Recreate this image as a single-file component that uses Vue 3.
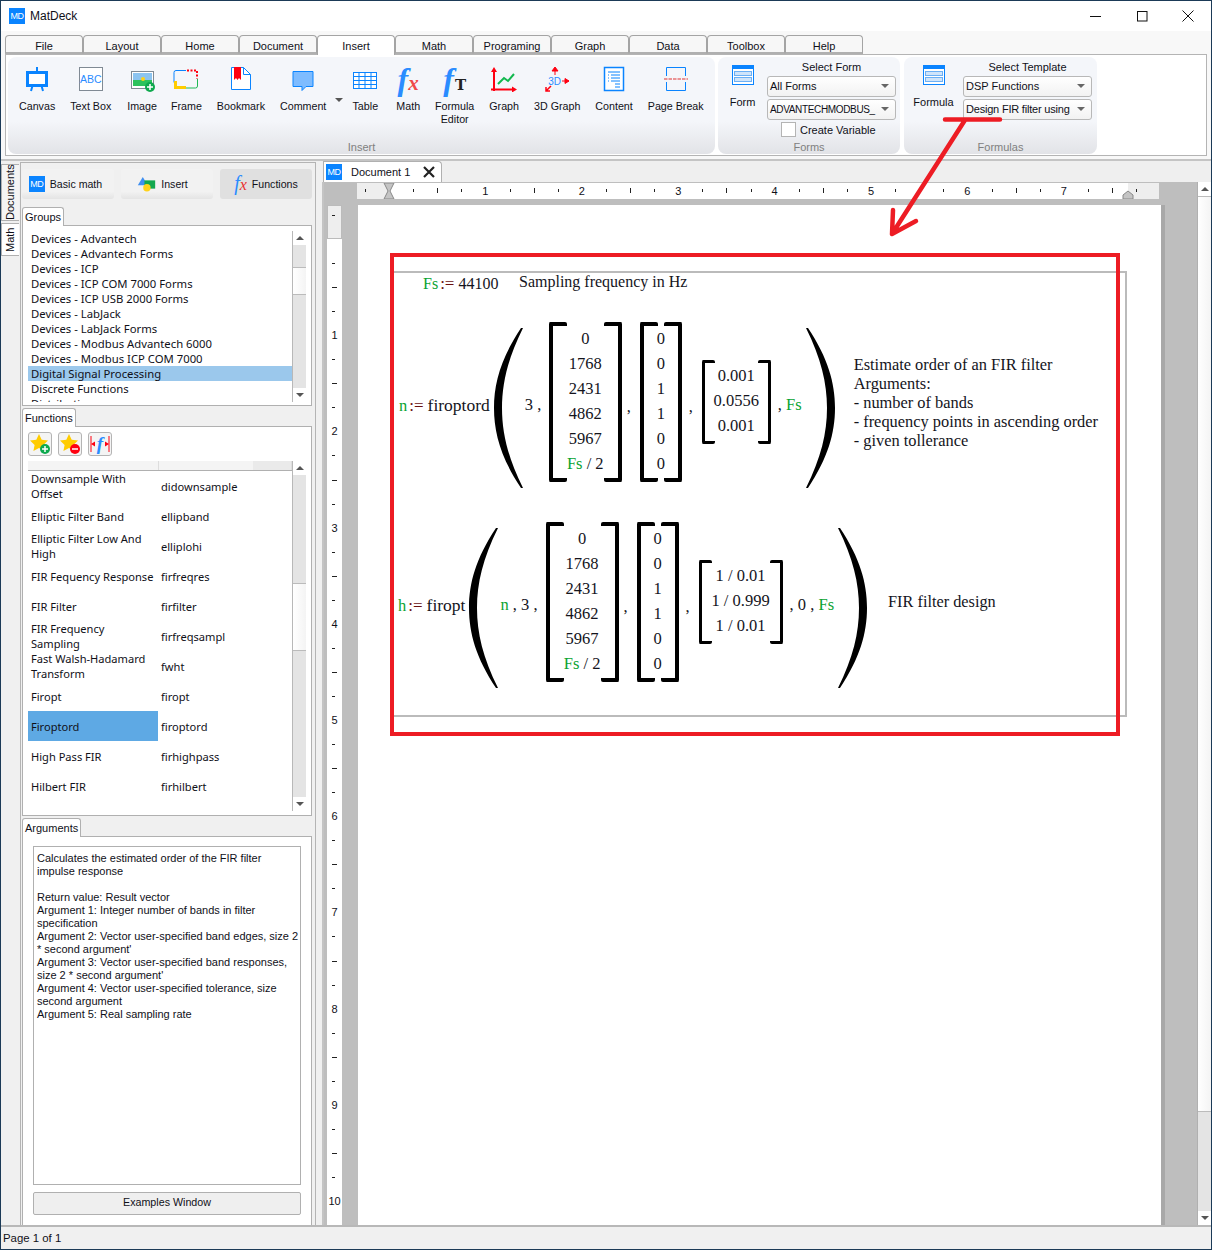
<script setup>
import { computed } from 'vue'

const groups = [
  'Devices - Advantech', 'Devices - Advantech Forms', 'Devices - ICP', 'Devices - ICP COM 7000 Forms',
  'Devices - ICP USB 2000 Forms', 'Devices - LabJack', 'Devices - LabJack Forms', 'Devices - Modbus Advantech 6000',
  'Devices - Modbus ICP COM 7000', 'Digital Signal Processing', 'Discrete Functions', 'Distribution'
]

const functions = [
  ['Downsample With Offset', 'didownsample'],
  ['Elliptic Filter Band', 'ellipband'],
  ['Elliptic Filter Low And High', 'elliplohi'],
  ['FIR Fequency Response', 'firfreqres'],
  ['FIR Filter', 'firfilter'],
  ['FIR Frequency Sampling', 'firfreqsampl'],
  ['Fast Walsh-Hadamard Transform', 'fwht'],
  ['Firopt', 'firopt'],
  ['Firoptord', 'firoptord'],
  ['High Pass FIR', 'firhighpass'],
  ['Hilbert FIR', 'firhilbert']
]

const tabs = ['File', 'Layout', 'Home', 'Document', 'Insert', 'Math', 'Programing', 'Graph', 'Data', 'Toolbox', 'Help']

const argLines = [
  'Calculates the estimated order of the FIR filter',
  'impulse response',
  '',
  'Return value: Result vector',
  'Argument 1: Integer number of bands in filter',
  'specification',
  'Argument 2: Vector user-specified band edges, size 2',
  '* second argument\'',
  'Argument 3: Vector user-specified band responses,',
  'size 2 * second argument\'',
  'Argument 4: Vector user-specified tolerance, size',
  'second argument',
  'Argument 5: Real sampling rate'
]

// ruler marks, one every quarter of a unit (24.1px)
const hMarks = computed(() => {
  const out = []
  for (let i = -1; i <= 31; i++) {
    const kind = i % 4 === 0 ? 'num' : i % 2 === 0 ? 'long' : 'short'
    if (i !== 0) out.push({ pos: 32 + i * 24.1, kind, label: i / 4 })
  }
  return out
})

const vMarks = computed(() => {
  const out = []
  for (let i = -1; i <= 40; i++) {
    const kind = i % 4 === 0 ? 'num' : i % 2 === 0 ? 'long' : 'short'
    if (i !== 0) out.push({ pos: 34 + i * 24.05, kind, label: i / 4 })
  }
  return out
})

const m1 = ['0', '1768', '2431', '4862', '5967']
const m2 = ['0', '0', '1', '1', '0', '0']
</script>

<template>
  <div class="window">
    <!-- Titelleiste -->
    <header class="titlebar">
      <span class="md-logo">MD</span>
      <span class="app-name">MatDeck</span>
      <div class="win-controls">
        <svg width="16" height="16" viewBox="0 0 16 16"><path d="M2 8.5h11" stroke="#111" stroke-width="1" /></svg>
        <svg width="16" height="16" viewBox="0 0 16 16"><rect x="3.5" y="3.5" width="9.5" height="9.5" fill="none" stroke="#111" /></svg>
        <svg width="16" height="16" viewBox="0 0 16 16"><path d="M2.5 2.5l11 11M13.5 2.5l-11 11" stroke="#111" /></svg>
      </div>
    </header>

    <!-- Ribbon -->
    <div class="ribbon-wrap">
      <nav class="ribbon-tabs">
        <div v-for="t in tabs" :key="t" class="ribbon-tab" :class="{ active: t === 'Insert' }">{{ t }}</div>
      </nav>
      <div class="ribbon">
        <section class="group group-insert">
          <div class="tools">
            <div class="tool">
              <svg width="24" height="26" viewBox="0 0 24 26"><path d="M12 1v4M6 25l2-7M18 25l-2-7" stroke="#0a84ff" stroke-width="2" fill="none" /><rect x="2.500" y="6.500" width="19" height="13" fill="#fff" stroke="#0a84ff" stroke-width="3" /></svg>
              <span>Canvas</span>
            </div>
            <div class="tool">
              <div class="abc-icon"><span>ABC</span></div>
              <span>Text Box</span>
            </div>
            <div class="tool image-tool">
              <svg width="26" height="26" viewBox="0 0 26 26"><rect x="2.500" y="5.500" width="22" height="17" fill="#fff" stroke="#808a94" /><rect x="4" y="7" width="19" height="7" fill="#8cc4f0" /><rect x="4" y="14" width="19" height="6" fill="#2cc25c" /><circle cx="14" cy="13" r="2" fill="#ffd21a" /><circle cx="21" cy="21" r="5" fill="#0ea94e" /><path d="M21 18v6M18 21h6" stroke="#fff" stroke-width="1.500" /></svg>
              <span>Image</span>
            </div>
            <div class="tool">
              <svg width="26" height="26" viewBox="0 0 26 26"><path d="M13 4.500H3q-2 0-2 2v10" fill="none" stroke="#0a84ff" /><path d="M14 4.500h10v8" fill="none" stroke="#f01" stroke-width="2" stroke-dasharray="2 1.500" /><path d="M24.500 13v7q0 2-2 2H13" fill="none" stroke="#1eb854" /><path d="M1 15v8h12v-3H4v-5z" fill="#fc0" /></svg>
              <span>Frame</span>
            </div>
            <div class="tool">
              <svg width="22" height="26" viewBox="0 0 22 26"><path d="M1.500 1.500h12l7 7v15h-19z" fill="#fff" stroke="#0a84ff" /><path d="M13.500 1.500v7h7" fill="none" stroke="#0a84ff" /><path d="M4 1h7v13l-2-2-1.500 2-1.500-2-2 2z" fill="#f01" /></svg>
              <span>Bookmark</span>
            </div>
            <div class="tool">
              <svg width="24" height="26" viewBox="0 0 24 26"><path d="M2 5.500h20v15h-7l-4 4v-4H2z" fill="#7ebcff" stroke="#0a84ff" /></svg>
              <span>Comment</span>
            </div>
            <div class="drop-arrow"></div>
            <div class="tool">
              <svg width="26" height="26" viewBox="0 0 26 26"><rect x="1.500" y="6.500" width="23" height="16" fill="#fff" stroke="#0a84ff" /><path d="M1.500 10.500h23M1.500 14.500h23M1.500 18.500h23M7 6.500v16M13 6.500v16M19 6.500v16" stroke="#0a84ff" fill="none" /></svg>
              <span>Table</span>
            </div>
            <div class="tool math-tool">
              <div class="fx-icon"><i class="f">f</i><i class="x">x</i></div>
              <span>Math</span>
            </div>
            <div class="tool">
              <div class="fx-icon"><i class="f">f</i><b class="t">T</b></div>
              <span>Formula<br>Editor</span>
            </div>
            <div class="tool">
              <svg width="26" height="26" viewBox="0 0 26 26"><path d="M3 3v22M0 23.500h23" stroke="#f01" stroke-width="2" fill="none" /><path d="M3 1L0 6h6zM26 23.500l-5-3v6z" fill="#f01" /><path d="M7 18l6-6 4 3 6-7" stroke="#12b84e" stroke-width="2" fill="none" /></svg>
              <span>Graph</span>
            </div>
            <div class="tool">
              <div class="d3-icon">
                <span>3D</span>
                <svg width="26" height="26" viewBox="0 0 26 26"><path d="M11 9V3M11 1l3 4H8z" fill="#f01" stroke="#f01" /><path d="M18 15h7M25 15l-4-2.500v5z" fill="#f01" stroke="#f01" /><path d="M7 20l-5 5M2 21v4h4" fill="none" stroke="#f01" stroke-width="1.500" /></svg>
              </div>
              <span>3D Graph</span>
            </div>
            <div class="tool">
              <svg width="22" height="26" viewBox="0 0 22 26"><rect x="1.500" y="1.500" width="19" height="23" fill="#fff" stroke="#0a84ff" stroke-width="1.500" /><path d="M5 6h12M5 9h1M8 9h9M5 12h1M8 12h9M5 15h1M8 15h9M12 18h5M12 21h5" stroke="#0a84ff" /></svg>
              <span>Content</span>
            </div>
            <div class="tool">
              <svg width="26" height="26" viewBox="0 0 26 26"><path d="M3.500 10V1.500h19V10M3.500 16v8.500h19V16" fill="none" stroke="#0a84ff" /><path d="M1 13h24" stroke="#e03030" stroke-dasharray="3.500 1" /></svg>
              <span>Page Break</span>
            </div>
          </div>
          <div class="group-label">Insert</div>
        </section>

        <section class="group group-forms">
          <div class="group-body">
            <div class="tool form-tool">
              <svg width="22" height="20" viewBox="0 0 22 20"><rect x=".5" y=".5" width="21" height="19" fill="#fff" stroke="#0a84ff" /><rect x="0" y="0" width="22" height="4" fill="#0a84ff" /><rect x="2.500" y="6.500" width="17" height="4" fill="#cfe4fa" stroke="#6cb0f5" /><rect x="2.500" y="12.500" width="17" height="4" fill="#cfe4fa" stroke="#6cb0f5" /></svg>
              <span>Form</span>
            </div>
            <div class="selects">
              <div class="select-title">Select Form</div>
              <div class="combo"><span>All Forms</span></div>
              <div class="combo"><span class="tight">ADVANTECHMODBUS_</span></div>
              <label class="check"><span class="box"></span>Create Variable</label>
            </div>
          </div>
          <div class="group-label">Forms</div>
        </section>

        <section class="group group-formulas">
          <div class="group-body">
            <div class="tool form-tool wide">
              <svg width="22" height="20" viewBox="0 0 22 20"><rect x=".5" y=".5" width="21" height="19" fill="#fff" stroke="#0a84ff" /><rect x="0" y="0" width="22" height="4" fill="#0a84ff" /><rect x="2.500" y="6.500" width="17" height="4" fill="#cfe4fa" stroke="#6cb0f5" /><rect x="2.500" y="12.500" width="17" height="4" fill="#cfe4fa" stroke="#6cb0f5" /></svg>
              <span>Formula</span>
            </div>
            <div class="selects">
              <div class="select-title">Select Template</div>
              <div class="combo"><span>DSP Functions</span></div>
              <div class="combo"><span class="slim">Design FIR filter using</span></div>
            </div>
          </div>
          <div class="group-label">Formulas</div>
        </section>
      </div>
    </div>

    <div class="main">
      <!-- Vertikale Tabs links -->
      <aside class="side-tabs">
        <div class="side-tab">Documents</div>
        <div class="side-tab active">Math</div>
      </aside>

      <!-- Linkes Panel -->
      <div class="left-panel">
        <div class="mode-buttons">
          <div class="mode-btn basic"><span class="md-logo">MD</span>Basic math</div>
          <div class="mode-btn insert">
            <svg width="19" height="17" viewBox="0 0 23 20"><path d="M7 1l6 10H1z" fill="#3f8ff0" /><rect x="9" y="5" width="13" height="10" fill="#12a84e" /><circle cx="12" cy="14" r="4.500" fill="#ffd21a" /></svg>
            Insert
          </div>
          <div class="mode-btn on"><span class="fx-small"><i class="f">f</i><i class="x">x</i></span>Functions</div>
        </div>

        <div class="pane-tab">Groups</div>
        <div class="pane groups-pane">
          <ul class="group-list">
            <li v-for="g in groups" :key="g" :class="{ sel: g === 'Digital Signal Processing' }">{{ g }}</li>
          </ul>
          <div class="vscroll">
            <div class="arrow up"></div>
            <div class="track grow-a"></div>
            <div class="thumb grow-b"></div>
            <div class="track grow-c"></div>
            <div class="arrow down"></div>
          </div>
        </div>

        <div class="pane-tab">Functions</div>
        <div class="pane functions-pane">
          <div class="fav-buttons">
            <div class="fav">
              <svg width="22" height="22" viewBox="0 0 22 22"><path d="M10 1l2.700 5.800 6.300.8-4.600 4.300 1.200 6.200L10 15l-5.600 3.100 1.200-6.200L1 7.600l6.300-.8z" fill="#fc0" /><circle cx="16" cy="16" r="5" fill="#0ea94e" /><path d="M16 13v6M13 16h6" stroke="#fff" stroke-width="1.500" /></svg>
            </div>
            <div class="fav">
              <svg width="22" height="22" viewBox="0 0 22 22"><path d="M10 1l2.700 5.800 6.300.8-4.600 4.300 1.200 6.200L10 15l-5.600 3.100 1.200-6.200L1 7.600l6.300-.8z" fill="#fc0" /><circle cx="16" cy="16" r="5" fill="#f01" /><path d="M13 16h6" stroke="#fff" stroke-width="1.500" /></svg>
            </div>
            <div class="fav">
              <span class="fav-f">f</span>
              <svg class="fav-marks" width="22" height="22" viewBox="0 0 22 22"><path d="M2 3v16M20 3v16" stroke="#f01" /><path d="M2 11l4-2.500v5zM20 11l-4-2.500v5z" fill="#f01" /></svg>
            </div>
          </div>
          <div class="fn-table">
            <div class="fn-grid">
              <div class="fn-head"><span></span><span></span><span class="fn-head-end"></span></div>
              <div v-for="f in functions" :key="f[1]" class="fn-row">
                <div class="fn-name" :class="{ sel: f[1] === 'firoptord' }">{{ f[0] }}</div>
                <div class="fn-code">{{ f[1] }}</div>
              </div>
            </div>
            <div class="vscroll">
              <div class="arrow up"></div>
              <div class="track fn-a"></div>
              <div class="thumb fn-b"></div>
              <div class="track fn-c"></div>
              <div class="arrow down"></div>
            </div>
          </div>
        </div>

        <div class="pane-tab">Arguments</div>
        <div class="pane args-pane">
          <div class="args-text">
            <div v-for="(line, i) in argLines" :key="i" class="arg-line">{{ line }}</div>
          </div>
          <div class="examples-btn">Examples Window</div>
        </div>
      </div>

      <!-- Dokumentbereich -->
      <div class="doc-area">
        <div class="doc-tabs">
          <div class="doc-tab">
            <span class="md-logo">MD</span>
            <span class="doc-name">Document 1</span>
            <svg width="14" height="14" viewBox="0 0 14 14"><path d="M2 2l10 10M12 2L2 12" stroke="#222" stroke-width="2.200" /></svg>
          </div>
        </div>
        <div class="doc-view">
          <div class="doc-scroll-area">
            <div class="hruler">
              <div class="hruler-margin left"></div>
              <div class="hruler-margin right"></div>
              <template v-for="m in hMarks" :key="m.pos">
                <span v-if="m.kind === 'num'" class="h-num" :style="{ left: m.pos + 'px' }">{{ m.label }}</span>
                <span v-else class="h-tick" :class="m.kind" :style="{ left: m.pos + 'px' }"></span>
              </template>
              <svg class="marker m0" width="12" height="16" viewBox="0 0 12 16"><path d="M1 0h10L7 8l4 8H1l4-8z" fill="#c4c4c4" stroke="#888" /></svg>
              <svg class="marker m1" width="12" height="16" viewBox="0 0 12 16"><path d="M6 8l5 4v4H1v-4z" fill="#c4c4c4" stroke="#888" /></svg>
            </div>
            <div class="doc-row">
              <div class="vruler">
                <div class="vruler-margin"></div>
                <template v-for="m in vMarks" :key="m.pos">
                  <span v-if="m.kind === 'num'" class="v-num" :style="{ top: m.pos + 'px' }">{{ m.label }}</span>
                  <span v-else class="v-tick" :class="m.kind" :style="{ top: m.pos + 'px' }"></span>
                </template>
              </div>
              <div class="page">
                <div class="region"></div>

                <div class="line-fs">
                  <span class="var">Fs</span><span class="op">:=</span><span class="num"> 44100</span>
                </div>
                <div class="note note-fs">Sampling frequency in Hz</div>

                <!-- n := firoptord(...) -->
                <div class="expr expr-n">
                  <span class="lhs"><span class="var">n</span><span class="op">:=</span><span class="call">firoptord</span></span>
                  <svg class="paren" width="30" height="160" viewBox="0 0 30 160"><path d="M28 0C8 30 1 55 1 80s7 50 27 80h2C15 130 9 105 9 80s6-50 21-80z" /></svg>
                  <span class="arg a-3">3 ,</span>
                  <div class="matrix big wide">
                    <div v-for="(v, i) in m1" :key="i">{{ v }}</div>
                    <div><span class="var">Fs</span> / 2</div>
                  </div>
                  <span class="comma c1">,</span>
                  <div class="matrix big narrow"><div v-for="(v, i) in m2" :key="i">{{ v }}</div></div>
                  <span class="comma c2">,</span>
                  <div class="matrix small tol1">
                    <div>0.001</div><div>0.0556</div><div>0.001</div>
                  </div>
                  <span class="arg a-fs">, <span class="var">Fs</span></span>
                  <svg class="paren" width="30" height="160" viewBox="0 0 30 160"><path d="M2 0c20 30 27 55 27 80s-7 50-27 80H0c15-30 21-55 21-80S15 30 0 0z" /></svg>
                  <div class="note note-n">
                    Estimate order of an FIR filter<br>Arguments:<br>- number of bands<br>- frequency points in ascending order<br>- given tollerance
                  </div>
                </div>

                <!-- h := firopt(...) -->
                <div class="expr expr-h">
                  <span class="lhs"><span class="var">h</span><span class="op">:=</span><span class="call">firopt</span></span>
                  <svg class="paren" width="30" height="160" viewBox="0 0 30 160"><path d="M28 0C8 30 1 55 1 80s7 50 27 80h2C15 130 9 105 9 80s6-50 21-80z" /></svg>
                  <span class="arg a-n"><span class="var">n</span> , 3 ,</span>
                  <div class="matrix big wide">
                    <div v-for="(v, i) in m1" :key="i">{{ v }}</div>
                    <div><span class="var">Fs</span> / 2</div>
                  </div>
                  <span class="comma c1">,</span>
                  <div class="matrix big narrow"><div v-for="(v, i) in m2" :key="i">{{ v }}</div></div>
                  <span class="comma c2">,</span>
                  <div class="matrix small tol2">
                    <div>1 / 0.01</div><div>1 / 0.999</div><div>1 / 0.01</div>
                  </div>
                  <span class="arg a-0">, 0 , <span class="var">Fs</span></span>
                  <svg class="paren" width="30" height="160" viewBox="0 0 30 160"><path d="M2 0c20 30 27 55 27 80s-7 50-27 80H0c15-30 21-55 21-80S15 30 0 0z" /></svg>
                  <div class="note note-h">FIR filter design</div>
                </div>
              </div>
            </div>
          </div>
          <div class="vscroll doc-scroll">
            <div class="arrow up"></div>
            <div class="thumb doc-thumb"></div>
            <div class="track doc-track"></div>
            <div class="arrow down"></div>
          </div>
        </div>
      </div>
    </div>

    <footer class="statusbar">Page 1 of 1</footer>

    <!-- rote Markierung über dem Screenshot -->
    <div class="mark-rect"></div>
    <svg class="mark-arrow" width="1212" height="1250" viewBox="0 0 1212 1250">
      <path d="M945 119.500h55M965 120L892 234M893 210l-1 24 24-13" fill="none" stroke="#ed1c24" stroke-width="4.500" stroke-linecap="round" stroke-linejoin="round" />
    </svg>
  </div>
</template>

<style>
html, body { margin: 0; background: #f0f0f0; }
</style>

<style scoped>
.window {
  position: relative;
  width: 1212px;
  height: 1250px;
  box-sizing: border-box;
  border: 1px solid #1b3a57;
  background: #f0f0f0;
  font-family: "Liberation Sans", sans-serif;
  font-size: 11px;
  color: #101018;
  display: flex;
  flex-direction: column;
  overflow: hidden;
}

.md-logo {
  display: inline-flex;
  align-items: center;
  justify-content: center;
  width: 16px;
  height: 16px;
  background: #0a84ff;
  color: #fff;
  font-size: 9px;
  letter-spacing: -0.5px;
  flex: none;
}

/* Titelleiste */
.titlebar {
  height: 30px;
  background: #fff;
  display: flex;
  align-items: center;
  padding: 0 15px 0 8px;
  flex: none;
}
.app-name { margin-left: 5px; font-size: 12px; }
.win-controls { margin-left: auto; display: flex; gap: 30px; }

/* Ribbon */
.ribbon-wrap {
  background: #f8f8f8;
  padding: 4px 4px 0;
  flex: none;
  height: 130px;
  box-sizing: border-box;
  border-bottom: 2px solid #c4c4c4;
}
.ribbon-tabs { display: flex; height: 19px; }
.ribbon-tab {
  width: 78px;
  box-sizing: border-box;
  text-align: center;
  line-height: 20px;
  background: #f7f7f7;
  border: 1px solid #a4a4a4;
  border-bottom: 2px solid #b0b0b0;
  border-radius: 4px 4px 0 0;
}
.ribbon-tab.active { background: #fff; border-bottom: 0; position: relative; z-index: 1; height: 20px; }
.ribbon {
  height: 102px;
  box-sizing: border-box;
  background: #fff;
  border: 1px solid #b4b4b4;
  padding: 2px;
  display: flex;
  gap: 3px;
}
.group {
  display: flex;
  flex-direction: column;
  height: 97px;
  border-radius: 8px;
  background: linear-gradient(#f4f6fa 0, #f4f6fa 66%, #e2e3e7 100%);
  position: relative;
}
.group-insert { width: 707px; }
.group-forms { width: 182px; }
.group-formulas { width: 193px; margin-left: 1px; }
.group-label {
  position: absolute;
  left: 0;
  right: 0;
  bottom: 0;
  text-align: center;
  color: #808080;
  line-height: 14px;
}
.tools { display: flex; padding: 9px 0 0 11px; gap: 15px; align-items: flex-start; font-size: 10.7px; }
.tool {
  display: flex;
  flex-direction: column;
  align-items: center;
  text-align: center;
  line-height: 13px;
  gap: 8px;
  white-space: nowrap;
}
.image-tool { margin-left: 1px; margin-right: -1px; }
.math-tool { margin-left: 3px; }
.abc-icon {
  width: 24px;
  height: 24px;
  margin: 1px 0;
  border: 1px solid #808a94;
  box-sizing: border-box;
  display: flex;
  align-items: center;
  justify-content: center;
  color: #2a8cff;
  font-size: 10.5px;
  background: #fff;
}
.fx-icon {
  font-family: "Liberation Serif", serif;
  font-size: 32px;
  line-height: 26px;
  height: 26px;
  display: flex;
  align-items: baseline;
}
.fx-icon .f { color: #2a8cff; font-weight: bold; }
.fx-icon .x { color: #f04848; font-weight: bold; font-size: 21px; }
.fx-icon .t { font-size: 15px; color: #222; font-family: "DejaVu Serif", serif; margin-left: 1px; }
.d3-icon { position: relative; width: 26px; height: 26px; }
.d3-icon span { position: absolute; left: 4px; top: 9px; color: #2a8cff; font-size: 10px; z-index: 1; }
.drop-arrow {
  width: 0;
  height: 0;
  margin: 32px -6px 0 -6px;
  border: 4px solid transparent;
  border-top: 4px solid #555;
}
.group-body { display: flex; padding: 5px 0 0 0; }
.form-tool { width: 49px; padding-top: 3px; gap: 10px; flex: none; line-height: 14px; }
.form-tool.wide { width: 59px; }
.selects { display: flex; flex-direction: column; width: 129px; }
.select-title { text-align: center; line-height: 13px; margin-bottom: 2px; margin-top: -1px; }
.combo {
  height: 21px;
  box-sizing: border-box;
  border: 1px solid #b8b8b8;
  border-radius: 3px;
  margin-bottom: 2px;
  background: linear-gradient(#fff, #f2f2f2);
  line-height: 19px;
  padding-left: 2px;
  position: relative;
  white-space: nowrap;
}
.combo span { display: block; width: 110px; }
.combo .tight { font-size: 10px; letter-spacing: -0.35px; }
.combo .slim { letter-spacing: -0.2px; }
.combo::after {
  content: "";
  position: absolute;
  right: 6px;
  top: 7px;
  border: 4px solid transparent;
  border-top: 4px solid #666;
}
.check { display: flex; align-items: center; gap: 4px; padding-left: 14px; line-height: 14px; }
.box { width: 13px; height: 13px; border: 1px solid #b4b4b4; background: #fff; display: block; }

/* Hauptbereich */
.main { flex: 1; display: flex; min-height: 0; }
.side-tabs { width: 19px; padding-top: 3px; flex: none; display: flex; flex-direction: column; }
.side-tab {
  writing-mode: vertical-rl;
  transform: rotate(180deg);
  height: 57px;
  width: 18px;
  box-sizing: border-box;
  border: 1px solid #b0b0b0;
  border-left: 0;
  text-align: center;
  line-height: 16px;
  background: #f4f4f4;
  white-space: nowrap;
}
.side-tab.active { height: 33px; background: #fff; margin-top: 2px; }

.left-panel {
  width: 296px;
  box-sizing: border-box;
  margin-top: 1px;
  border: 1px solid #b4b4b4;
  flex: none;
  height: 1065px;
  padding: 0 2px 0 1px;
}
.mode-buttons { display: flex; gap: 7px; margin: 6px 0 8px 0; font-size: 10.6px; }
.mode-btn {
  width: 92px;
  height: 30px;
  box-sizing: border-box;
  border-radius: 3px;
  background: linear-gradient(#f2f2f2 0, #f2f2f2 75%, #e4e4e4 100%);
  display: flex;
  align-items: center;
  justify-content: center;
  gap: 5px;
}
.mode-btn.basic { padding-right: 5px; }
.mode-btn.insert { padding-right: 9px; }
.mode-btn.on { background: #e0e0e0; }
.fx-small { font-family: "Liberation Serif", serif; font-size: 20px; line-height: 20px; }
.fx-small .f { color: #2a8cff; }
.fx-small .x { color: #e83030; font-size: 16px; }

.pane-tab {
  display: table;
  background: #fff;
  border: 1px solid #b0b0b0;
  border-bottom: 0;
  border-radius: 3px 3px 0 0;
  padding: 0 2px;
  line-height: 18px;
  position: relative;
  z-index: 1;
  margin-bottom: -1px;
}
.pane { background: #fff; border: 1px solid #b0b0b0; box-sizing: border-box; width: 290px; }
.groups-pane { height: 181px; display: flex; padding: 5px 5px 3px 5px; margin-bottom: 2px; }
.group-list {
  list-style: none;
  margin: 0;
  padding: 0;
  flex: 1;
  overflow: hidden;
  font-family: "Noto Sans", sans-serif;
  font-size: 11.3px;
}
.group-list li { height: 15px; line-height: 15px; padding-left: 3px; white-space: nowrap; }
.group-list li.sel { background: #9bc8ec; }

.vscroll { width: 14px; box-sizing: border-box; border-left: 1px solid #b8b8b8; display: flex; flex-direction: column; flex: none; }
.arrow { height: 14px; background: #fff; position: relative; flex: none; }
.arrow::after {
  content: "";
  position: absolute;
  left: 3px;
  border: 4px solid transparent;
}
.arrow.up::after { top: 1px; border-bottom: 4px solid #555; }
.arrow.down::after { top: 5px; border-top: 4px solid #555; }
.track { background: #e4e4e4; flex: none; }
.thumb { background: linear-gradient(90deg, #fff, #f4f4f4); border-top: 1px solid #bbb; border-bottom: 1px solid #bbb; flex: none; }
.grow-a { height: 22px; }
.grow-b { height: 26px; }
.grow-c { flex: 1; }

.functions-pane { height: 390px; padding: 5px 5px 4px 5px; margin-bottom: 2px; }
.fav-buttons { display: flex; gap: 6px; height: 24px; margin-bottom: 5px; }
.fav {
  width: 24px;
  height: 24px;
  box-sizing: border-box;
  border: 1px solid #b4b4b4;
  border-radius: 3px;
  background: #f4f4f4;
  position: relative;
  display: flex;
  align-items: center;
  justify-content: center;
}
.fav-f { font-family: "Liberation Serif", serif; font-style: italic; font-size: 19px; color: #2a8cff; font-weight: bold; }
.fav-marks { position: absolute; left: 0; top: 0; }
.fn-table { display: flex; height: 350px; }
.fn-grid { flex: 1; min-width: 0; font-family: "Noto Sans", sans-serif; font-size: 11.1px; }
.fn-head { height: 9px; display: flex; background: #f4f4f4; border-bottom: 1px solid #b0b0b0; }
.fn-head span { display: block; width: 130px; border-right: 1px solid #ddd; }
.fn-head span:nth-child(2) { width: 94px; border: 0; }
.fn-head .fn-head-end { width: 38px; background: #eaeaea; }
.fn-row { display: flex; height: 30px; align-items: stretch; line-height: 15px; }
.fn-name { width: 130px; padding: 0 3px; box-sizing: border-box; display: flex; align-items: center; }
.fn-name.sel { background: #5ea9e4; }
.fn-code { padding-left: 3px; display: flex; align-items: center; }
.fn-a { height: 108px; }
.fn-b { height: 66px; }
.fn-c { flex: 1; }

.args-pane { height: 391px; padding: 9px 10px 0; }
.args-text { height: 339px; box-sizing: border-box; border: 1px solid #b0b0b0; padding: 5px 3px; font-size: 11px; line-height: 13px; }
.arg-line { height: 13px; white-space: nowrap; }
.examples-btn {
  margin-top: 7px;
  height: 21px;
  line-height: 19px;
  text-align: center;
  border: 1px solid #b0b0b0;
  border-radius: 2px;
  background: #efefef;
  font-size: 10.7px;
}

/* Dokument */
.doc-area { margin-left: 6px; flex: 1; min-width: 0; display: flex; flex-direction: column; height: 1066px; }
.doc-tabs { height: 21px; background: #efefef; flex: none; }
.doc-tab {
  width: 119px;
  height: 21px;
  box-sizing: border-box;
  background: #fff;
  border: 1px solid #b0b0b0;
  border-bottom: 0;
  border-radius: 0 4px 0 0;
  margin-left: 1px;
  display: flex;
  align-items: center;
  padding-left: 2px;
  white-space: nowrap;
}
.doc-name { margin-left: 9px; margin-right: 12px; }
.doc-view { flex: 1; display: flex; background: #bebebe; min-height: 0; border-left: 2px solid #c4c4c4; }
.doc-scroll-area { flex: 1; min-width: 0; position: relative; overflow: hidden; }
.hruler {
  position: relative;
  height: 16px;
  width: 802px;
  margin: 1px 0 0 33px;
  background: #fff;
}
.hruler-margin { position: absolute; top: 0; bottom: 0; background: #eee; }
.hruler-margin.left { left: 0; width: 32px; }
.hruler-margin.right { right: 0; width: 31px; }
.h-tick { position: absolute; width: 1px; background: #222; }
.h-tick.short { top: 6px; height: 3px; }
.h-tick.long { top: 5px; height: 5px; }
.h-num { position: absolute; top: 0; line-height: 16px; width: 16px; margin-left: -8px; text-align: center; font-size: 11px; }
.marker { position: absolute; top: 0; }
.marker.m0 { left: 26px; }
.marker.m1 { right: 25px; }
.doc-row { display: flex; margin-top: 6px; }
.vruler {
  position: relative;
  width: 15px;
  height: 1020px;
  margin-left: 3px;
  background: #fff;
  flex: none;
}
.vruler-margin { position: absolute; left: 0; right: 0; top: 0; height: 34px; background: #eee; border: 1px solid #bbb; box-sizing: border-box; }
.v-tick { position: absolute; left: 5px; height: 1px; background: #222; }
.v-tick.short { width: 3px; }
.v-tick.long { width: 5px; }
.v-num { position: absolute; left: 0; width: 15px; text-align: center; line-height: 12px; margin-top: -6px; font-size: 11px; }
.page {
  position: relative;
  width: 803px;
  height: 1020px;
  margin-left: 16px;
  background: #fff;
  border-right: 4px solid #a8a8a8;
  font-family: "Liberation Serif", serif;
  font-size: 16.5px;
  color: #14141c;
  flex: none;
}
.region { position: absolute; left: 34px; top: 66px; width: 735px; height: 446px; border: 2px solid #bbb; box-sizing: border-box; }

.var { color: #0aa332; }
.op { color: #6a1010; margin: 0 0 0 2px; font-size: 17px; }
.line-fs { position: absolute; left: 65px; top: 69px; line-height: 20px; white-space: pre; font-size: 16px; }
.note-fs { position: absolute; left: 161px; top: 67px; line-height: 20px; white-space: nowrap; font-size: 16px; }

.expr { position: absolute; display: flex; align-items: center; height: 160px; white-space: nowrap; }
.expr-n { left: 41px; top: 117px; }
.expr-h { left: 40px; top: 317px; }
.lhs { padding-top: 6px; flex: none; }
.expr .call { margin-left: 4px; font-size: 17.5px; }
.paren { flex: none; fill: #000; margin: 12px 0 0 3px; }
.expr .paren:last-of-type { margin-left: 4px; }
.arg { flex: none; padding-top: 5px; }
.a-3 { margin: 0 2px 0 2px; width: 22px; }
.a-n { margin: 0 8px 0 2px; }
.comma { flex: none; width: 8px; text-align: center; padding-top: 10px; }
.c1 { margin: 0 7px 0 3px; }
.c2 { margin: 0 7px 0 5px; }
.a-fs { margin-left: 7px; }
.a-0 { margin-left: 7px; }

.matrix { position: relative; flex: none; text-align: center; box-sizing: border-box; }
.matrix > div { height: 25px; line-height: 25px; }
.matrix::before, .matrix::after {
  content: "";
  position: absolute;
  top: 0;
  bottom: 0;
  width: 18px;
  border: 4px solid #000;
  border-radius: 2px;
  box-sizing: border-box;
}
.matrix::before { left: 0; border-right: 0; }
.matrix::after { right: 0; border-left: 0; }
.matrix.big { height: 160px; padding-top: 4px; }
.matrix.wide { width: 73px; }
.matrix.narrow { width: 42px; }
.matrix.small { height: 84px; padding-top: 3px; }
.matrix.small::before, .matrix.small::after { border-width: 3px; width: 13px; }
.matrix.tol1 { width: 69px; }
.matrix.tol2 { width: 84px; }

.note-n { margin-left: 18px; line-height: 19px; white-space: nowrap; text-align: left; font-size: 16.4px; }
.note-h { margin-left: 20px; font-size: 16.3px; }

.statusbar { flex: none; line-height: 23px; padding-left: 2px; border-top: 2px solid #b8b8b8; box-sizing: border-box; height: 24px; font-size: 11.4px; }

.doc-scroll { height: 1043px; border-left: 1px solid #b0b0b0; }
.doc-thumb { height: 914px; }
.doc-track { flex: 1; }

.mark-rect {
  position: absolute;
  left: 389px;
  top: 252px;
  width: 730px;
  height: 483px;
  box-sizing: border-box;
  border: 4px solid #ed1c24;
}
.mark-arrow { position: absolute; left: -1px; top: -1px; pointer-events: none; }
</style>
